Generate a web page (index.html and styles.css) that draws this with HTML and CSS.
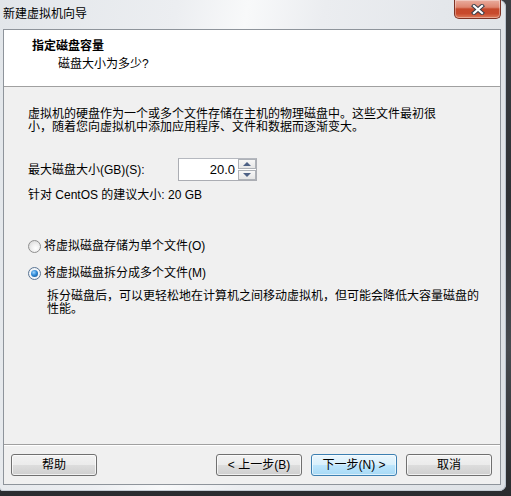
FILE: index.html
```html
<!DOCTYPE html>
<html lang="zh-CN">
<head>
<meta charset="utf-8">
<title>新建虚拟机向导</title>
<link rel="stylesheet" href="styles.css">
</head>
<body>
<div class="window">
  <div class="titlebar">
    <span class="title">新建虚拟机向导</span>
    <button class="close" aria-label="关闭">
      <svg width="14" height="11" viewBox="0 0 14 11">
        <path d="M3 2 L11 9 M11 2 L3 9" stroke="#3a3f4a" stroke-width="4.2" stroke-linecap="square" fill="none"/>
        <path d="M3 2 L11 9 M11 2 L3 9" stroke="#ffffff" stroke-width="2.2" stroke-linecap="square" fill="none"/>
      </svg>
    </button>
  </div>
  <div class="client">
    <div class="header">
      <div class="h-title">指定磁盘容量</div>
      <div class="h-sub">磁盘大小为多少?</div>
    </div>
    <div class="content">
      <p class="intro">虚拟机的硬盘作为一个或多个文件存储在主机的物理磁盘中。这些文件最初很小，随着您向虚拟机中添加应用程序、文件和数据而逐渐变大。</p>
      <div class="size-row">
        <span class="size-label">最大磁盘大小(GB)(S):</span>
        <div class="spin">
          <span class="spin-value">20.0</span>
          <div class="spin-btns">
            <span class="spin-btn"><span class="tri-up"></span></span>
            <span class="spin-btn"><span class="tri-down"></span></span>
          </div>
        </div>
      </div>
      <div class="recommend">针对 CentOS 的建议大小: 20 GB</div>
      <label class="radio-row first"><span class="radio"></span><span>将虚拟磁盘存储为单个文件(O)</span></label>
      <label class="radio-row second"><span class="radio checked"></span><span>将虚拟磁盘拆分成多个文件(M)</span></label>
      <p class="desc">拆分磁盘后，可以更轻松地在计算机之间移动虚拟机，但可能会降低大容量磁盘的性能。</p>
    </div>
    <div class="footer">
      <button class="btn">帮助</button>
      <div class="nav">
        <button class="btn">&lt; 上一步(B)</button>
        <button class="btn focus">下一步(N) &gt;</button>
        <button class="btn">取消</button>
      </div>
    </div>
  </div>
</div>
</body>
</html>
```

FILE: styles.css
```css
html, body {
  margin: 0;
  padding: 0;
}
body {
  width: 511px;
  height: 496px;
  overflow: hidden;
  background: linear-gradient(180deg, #3b3f44 0%, #2e3135 40%, #474b50 70%, #2a2c2f 100%);
  font-family: "Liberation Sans", "Noto Sans CJK SC", sans-serif;
  font-size: 12px;
  color: #000;
}
.window {
  width: 506px;
  height: 491px;
  box-sizing: border-box;
  border-radius: 0 7px 7px 3px;
  background: linear-gradient(100deg, #e2e6ea 0%, #eceef1 30%, #f8f9fa 42%, #ebedf0 55%, #e4e7eb 75%, #dde1e5 100%);
  box-shadow: inset -1px 0 0 #b9c3ce, inset 0 -1px 0 #c5ccd4;
  display: flex;
  flex-direction: column;
}
.titlebar {
  height: 29px;
  display: flex;
  justify-content: space-between;
  align-items: flex-start;
  padding: 0 5px 0 3px;
}
.title {
  line-height: 16px;
  margin-top: 6px;
}
.close {
  width: 47px;
  height: 19px;
  padding: 0;
  border: 1px solid #7d3224;
  border-top: none;
  border-radius: 0 0 5px 5px;
  background: linear-gradient(180deg, #e9ad9f 0%, #de8670 40%, #c5492c 50%, #c84a2d 75%, #dd7b5a 100%);
  box-shadow: inset 0 0 0 1px rgba(255,255,255,0.35);
  display: flex;
  align-items: center;
  justify-content: center;
}
.close svg { display: block; }
.client {
  margin: 0 5px 0 3px;
  height: 456px;
  box-sizing: border-box;
  border: 1px solid #8e949b;
  background: #f0f0f0;
  display: flex;
  flex-direction: column;
}
.header {
  height: 57px;
  box-sizing: border-box;
  background: #fff;
  border-bottom: 1px solid #a0a0a0;
  padding: 8px 0 0 28px;
}
.h-title {
  font-weight: bold;
  line-height: 16px;
}
.h-sub {
  line-height: 16px;
  margin: 2px 0 0 26px;
}
.content {
  flex: 1;
  padding: 0 0 0 24px;
}
.intro {
  margin: 21px 0 0 0;
  width: 410px;
  line-height: 13px;
}
.size-row {
  margin-top: 24px;
  display: flex;
  align-items: center;
  height: 23px;
}
.size-label {
  width: 150px;
  line-height: 14px;
}
.spin {
  width: 79px;
  height: 23px;
  box-sizing: border-box;
  border: 1px solid #abadb3;
  border-top-color: #b5b8bf;
  background: #fff;
  display: flex;
  align-items: center;
}
.spin-value {
  flex: 1;
  text-align: right;
  padding-right: 3px;
  font-size: 13px;
}
.spin-btns {
  width: 18px;
  height: 21px;
  display: flex;
  flex-direction: column;
  gap: 1px;
  background: #fff;
}
.spin-btn {
  flex: 1;
  box-sizing: border-box;
  border: 1px solid #aeb2b8;
  background: linear-gradient(180deg, #f7f7f7 0%, #e6e6e6 100%);
  display: flex;
  align-items: center;
  justify-content: center;
}
.tri-up {
  width: 0; height: 0;
  border-left: 4px solid transparent;
  border-right: 4px solid transparent;
  border-bottom: 4px solid #4d6185;
}
.tri-down {
  width: 0; height: 0;
  border-left: 4px solid transparent;
  border-right: 4px solid transparent;
  border-top: 4px solid #4d6185;
}
.recommend {
  margin-top: 7px;
  line-height: 14px;
}
.radio-row {
  display: flex;
  align-items: center;
  gap: 3px;
  height: 16px;
  line-height: 16px;
}
.radio-row.first { margin-top: 36px; }
.radio-row.second { margin-top: 11px; }
.radio {
  width: 13px;
  height: 13px;
  box-sizing: border-box;
  border-radius: 50%;
  border: 1px solid #8f8f8f;
  background: radial-gradient(circle at 60% 65%, #ffffff 0%, #f0f0f0 40%, #d2d2d2 100%);
  position: relative;
}
.radio.checked {
  border-color: #5b7593;
  background: radial-gradient(circle, #ffffff 0%, #e8eef5 100%);
}
.radio.checked::after {
  content: "";
  position: absolute;
  left: 2px;
  top: 2px;
  width: 7px;
  height: 7px;
  border-radius: 50%;
  background: radial-gradient(circle at 40% 35%, #9fd6ff 0%, #2e8ad8 45%, #16497f 100%);
}
.desc {
  margin: 9px 0 0 19px;
  width: 435px;
  line-height: 13px;
}
.footer {
  border-top: 1px solid #a0a0a0;
  box-shadow: inset 0 1px 0 #ffffff;
  padding: 9px 8px 8px 7px;
  display: flex;
  justify-content: space-between;
}
.nav {
  display: flex;
  gap: 9px;
}
.btn {
  width: 86px;
  height: 22px;
  padding: 0;
  box-sizing: border-box;
  border: 1px solid #707070;
  border-radius: 3px;
  background: linear-gradient(180deg, #f2f2f2 0%, #ebebeb 49%, #dddddd 50%, #cfcfcf 100%);
  box-shadow: inset 0 0 0 1px rgba(255,255,255,0.7);
  font-family: "Liberation Sans", "Noto Sans CJK SC", sans-serif;
  font-size: 12px;
  color: #000;
  line-height: 18px;
}
.btn.focus {
  border-color: #3c7fb1;
  background: linear-gradient(180deg, #eaf6fd 0%, #d9f0fc 49%, #bee6fd 50%, #a7d9f5 100%);
  box-shadow: inset 0 0 0 1px rgba(255,255,255,0.6);
}
```
